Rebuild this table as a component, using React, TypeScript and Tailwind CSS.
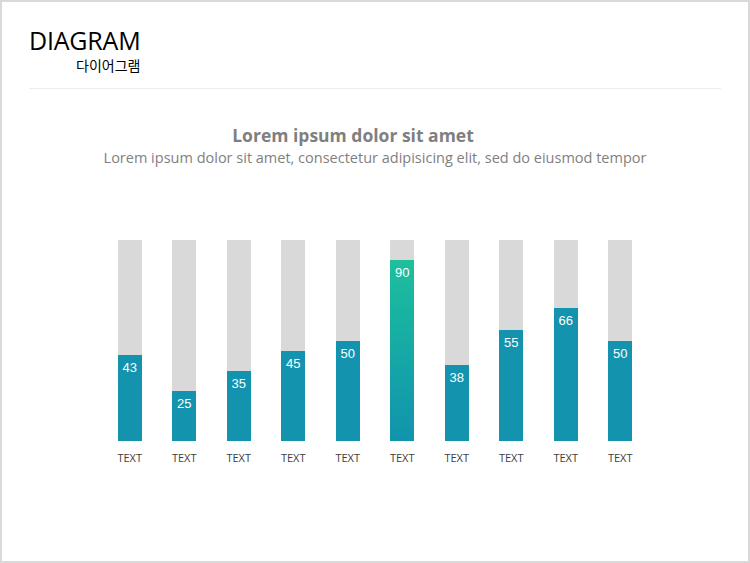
const values = [43, 25, 35, 45, 50, 90, 38, 55, 66, 50];

function Bar({ value }: { value: number }) {
  const highlight = value === 90;
  return (
    <div className="flex flex-col items-center w-6">
      <div className="flex flex-col justify-end w-6 h-[201px] bg-[#d9d9d9]">
        <div
          className={
            highlight
              ? "w-6 pt-[6px] text-center bg-gradient-to-b from-[#1fbf9c] to-[#1293ad]"
              : "w-6 pt-[6px] text-center bg-[#1493ae]"
          }
          style={{ height: `${(value / 100) * 201}px` }}
        >
          <span className="block text-[13px] leading-[14px] text-white font-['Liberation_Sans',sans-serif]">
            {value}
          </span>
        </div>
      </div>
      <span className="mt-[11px] whitespace-nowrap text-[11px] leading-[12px] text-[#404040] font-['Open_Sans',sans-serif]">
        TEXT
      </span>
    </div>
  );
}

export default function App() {
  return (
    <div className="w-[750px] h-[563px] border-2 border-[#d9d9d9] bg-white">
      {/* Header */}
      <div className="px-[27px] pt-[24px]">
        <div className="inline-flex flex-col items-end">
          <span className="text-[25px] leading-[29px] text-black font-['Open_Sans',sans-serif] tracking-[-0.2px]">
            DIAGRAM
          </span>
          <span className="mt-[2px] text-[14px] leading-[16px] text-black font-['Noto_Sans_CJK_KR',sans-serif]">
            다이어그램
          </span>
        </div>
        <div className="mt-[15px] h-px bg-[#ececec]" />
      </div>

      {/* Titles */}
      <div className="mt-[34px] flex flex-col items-center">
        <span className="pr-[44px] text-[17.5px] leading-[24px] font-bold text-[#7f7f7f] font-['Open_Sans',sans-serif]">
          Lorem ipsum dolor sit amet
        </span>
        <span className="mt-[1px] text-[14.5px] leading-[20px] text-[#7f7f7f] font-['Open_Sans',sans-serif]">
          Lorem ipsum dolor sit amet, consectetur adipisicing elit, sed do eiusmod tempor
        </span>
      </div>

      {/* Chart */}
      <div className="mt-[72px] flex justify-center gap-[30.5px]">
        {values.map((v, i) => (
          <Bar key={i} value={v} />
        ))}
      </div>
    </div>
  );
}
